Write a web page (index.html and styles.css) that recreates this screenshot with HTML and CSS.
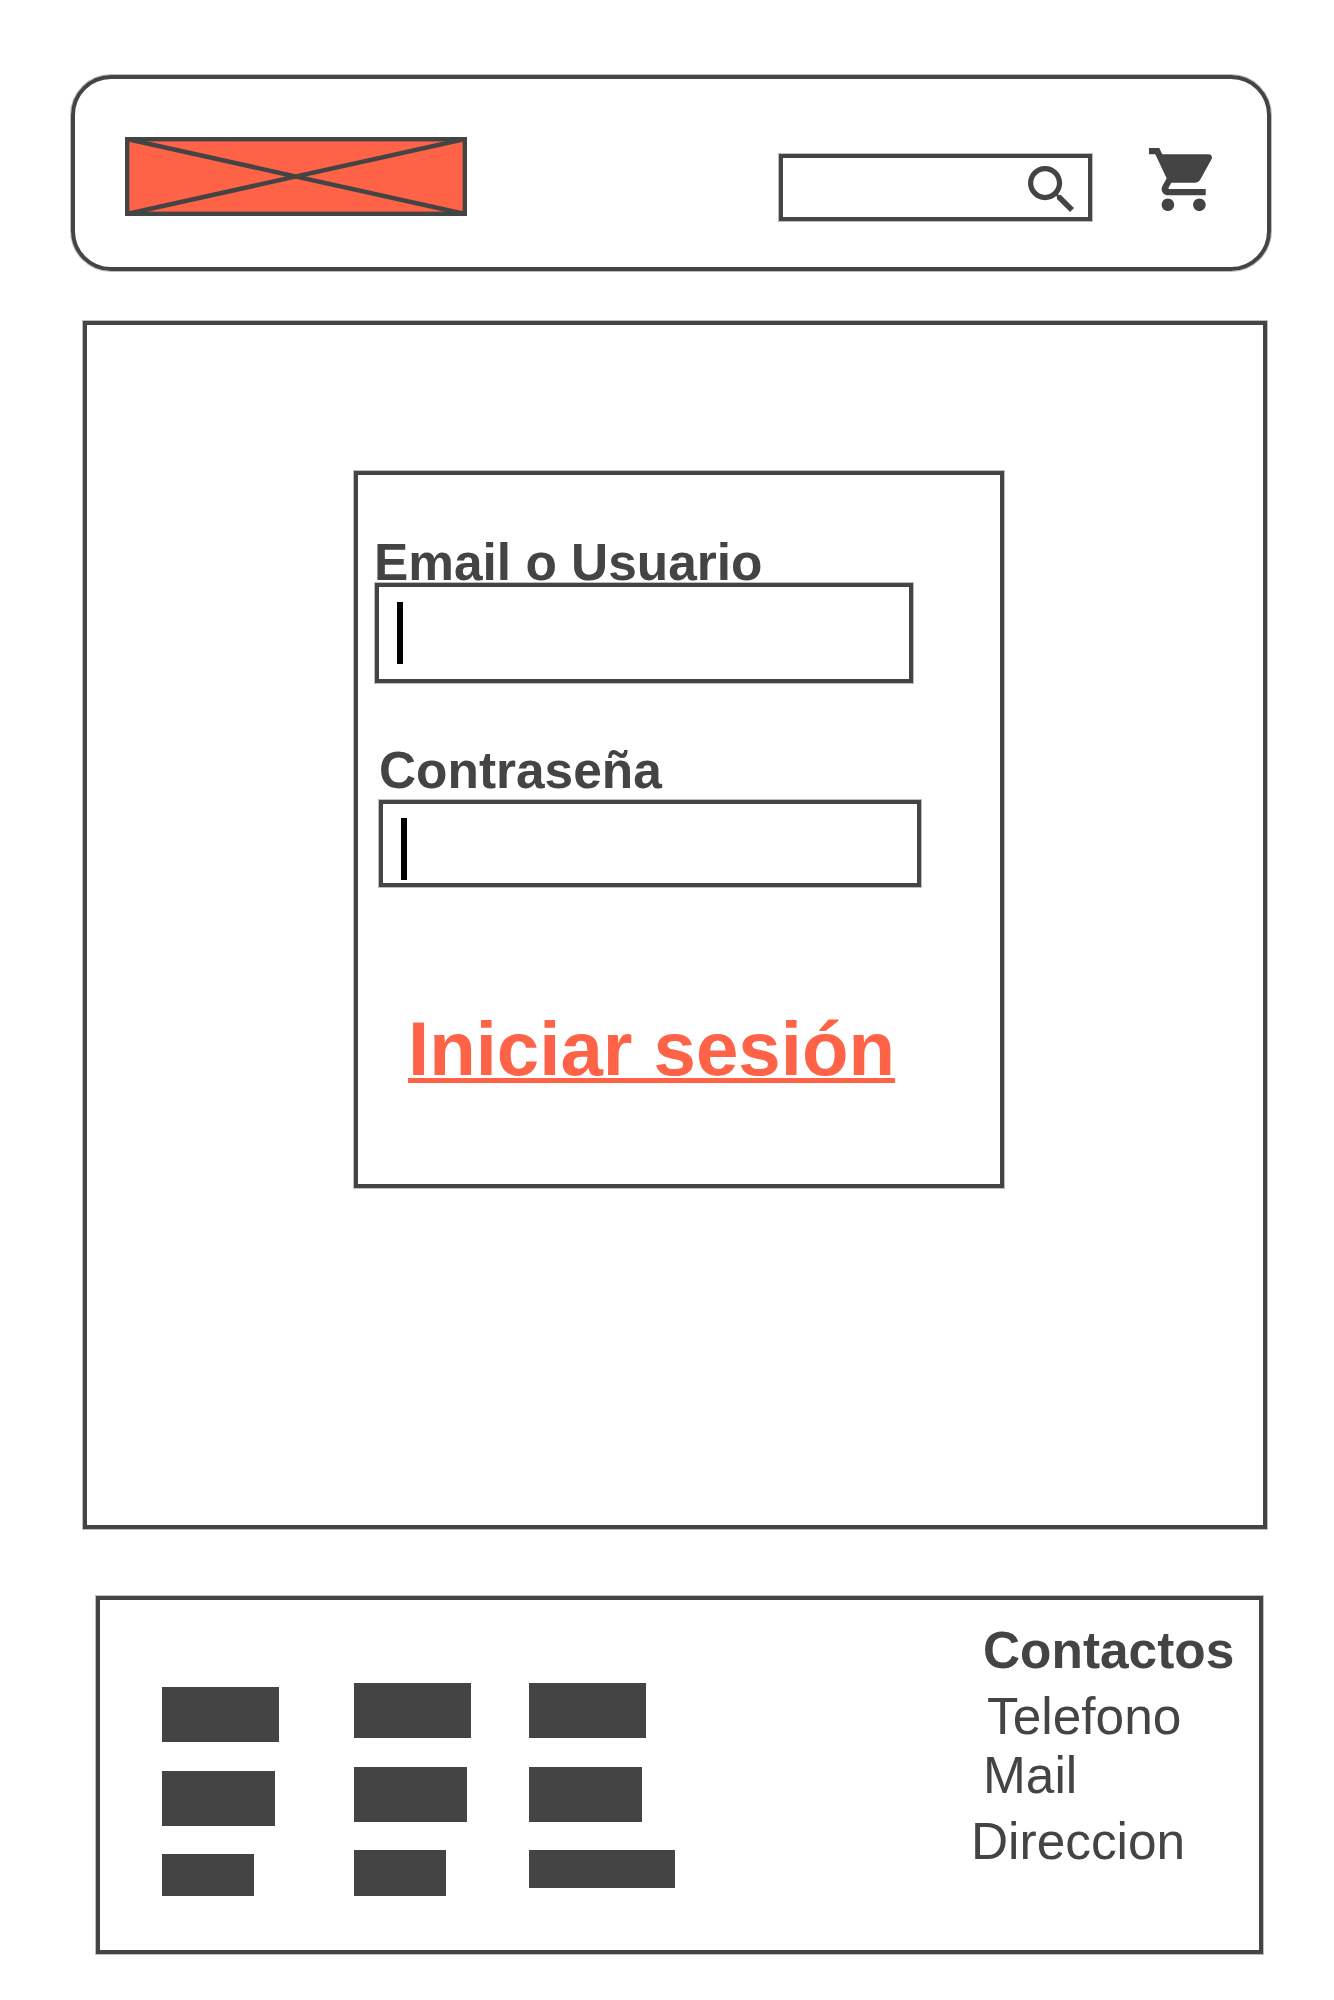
FILE: index.html
```html
<!DOCTYPE html>
<html lang="es">
<head>
  <meta charset="UTF-8">
  <meta name="viewport" content="width=device-width, initial-scale=1.0">
  <title>Iniciar sesi&oacute;n</title>
  <link rel="stylesheet" href="styles.css">
</head>
<body>
  <header class="cabecera">
    <svg class="logo" viewBox="0 0 342 79" aria-label="Logo">
      <rect x="2.2" y="2.2" width="337.6" height="74.6" fill="#ff6347" stroke="#444" stroke-width="4.4"/>
      <path d="M2 2 340 77M340 2 2 77" fill="none" stroke="#444" stroke-width="4.4"/>
    </svg>
    <div class="buscador">
      <svg class="icono-buscar" viewBox="3 3 17.49 17.49" aria-label="Buscar">
        <path d="M15.5 14h-.79l-.28-.27C15.41 12.59 16 11.11 16 9.5 16 5.91 13.09 3 9.5 3S3 5.91 3 9.5 5.91 16 9.5 16c1.61 0 3.09-.59 4.23-1.57l.27.28v.79l5 4.99L20.49 19l-4.99-5zm-6 0C7.01 14 5 11.99 5 9.5S7.01 5 9.5 5 14 7.01 14 9.5 11.99 14 9.5 14z"/>
      </svg>
    </div>
    <svg class="carrito" viewBox="1 2 20 20" aria-label="Carrito">
      <path d="M7 18c-1.1 0-1.99.9-1.99 2S5.9 22 7 22s2-.9 2-2-.9-2-2-2zM1 2v2h2l3.6 7.59-1.35 2.45c-.16.28-.25.61-.25.96 0 1.1.9 2 2 2h12v-2H7.42c-.14 0-.25-.11-.25-.25l.03-.12.9-1.63h7.45c.75 0 1.41-.41 1.75-1.03l3.58-6.49c.08-.14.12-.31.12-.48 0-.55-.45-1-1-1H5.21l-.94-2H1zm16 16c-1.1 0-1.99.9-1.99 2s.89 2 1.99 2 2-.9 2-2-.9-2-2-2z"/>
    </svg>
  </header>

  <main class="contenido">
    <form class="login">
      <div class="etiqueta etiqueta-email">Email o Usuario</div>
      <div class="campo campo-email"><span class="cursor"></span></div>
      <div class="etiqueta etiqueta-clave">Contrase&ntilde;a</div>
      <div class="campo campo-clave"><span class="cursor"></span></div>
      <a class="enviar" href="#">Iniciar sesi&oacute;n</a>
    </form>
  </main>

  <footer class="pie">
    <div class="columna col-1">
      <div class="barra b117"></div>
      <div class="barra b113"></div>
      <div class="barra b92 corta"></div>
    </div>
    <div class="columna col-2">
      <div class="barra b117"></div>
      <div class="barra b113"></div>
      <div class="barra b92 media"></div>
    </div>
    <div class="columna col-3">
      <div class="barra b117"></div>
      <div class="barra b113"></div>
      <div class="barra b146 baja"></div>
    </div>
    <div class="contactos">
      <div class="contactos-titulo">Contactos</div>
      <div class="contacto telefono">Telefono</div>
      <div class="contacto mail">Mail</div>
      <div class="contacto direccion">Direccion</div>
    </div>
  </footer>
</body>
</html>
```

FILE: styles.css
```css
body {
  margin: 0;
  padding: 75px 0 0;
  height: 2000px;
  box-sizing: border-box;
  background-color: #fff;
  color: #444;
  font-family: "Liberation Sans", Arial, sans-serif;
}

/* los trazos del boceto tienen el borde un poco difuminado */
.cabecera, .buscador, .contenido, .login, .campo, .pie {
  box-shadow: 0 0 0 1px rgba(68, 68, 68, .35);
}

.cabecera {
  display: flex;
  align-items: flex-start;
  box-sizing: border-box;
  width: 1200px;
  height: 196px;
  margin-left: 71px;
  border: 4px solid #444;
  border-radius: 40px;
}
.logo {
  width: 342px;
  height: 79px;
  margin: 58px 0 0 50px;
}
.buscador {
  display: flex;
  justify-content: flex-end;
  box-sizing: border-box;
  width: 313px;
  height: 67px;
  margin: 75px 0 0 312px;
  padding: 8px 14px 0 0;
  border: 4px solid #444;
}
.icono-buscar {
  width: 46px;
  height: 46px;
  fill: #444;
}
.carrito {
  width: 63px;
  height: 63px;
  margin: 69px 0 0 57px;
  fill: #444;
}

.contenido {
  box-sizing: border-box;
  width: 1184px;
  height: 1208px;
  margin: 50px 0 0 83px;
  padding: 146px 0 0 267px;
  border: 4px solid #444;
}
.login {
  box-sizing: border-box;
  width: 650px;
  height: 717px;
  border: 4px solid #444;
}
.etiqueta {
  font-size: 51.4px;
  font-weight: bold;
  line-height: 44px;
}
.etiqueta-email {
  margin: 65px 0 -1px 16px;
}
.etiqueta-clave {
  margin: 65px 0 8px 21px;
}
.campo {
  box-sizing: border-box;
  border: 4px solid #444;
}
.campo-email {
  width: 538px;
  height: 100px;
  margin-left: 17px;
  padding: 15px 0 0 18px;
}
.campo-clave {
  width: 542px;
  height: 87px;
  margin-left: 21px;
  padding: 14px 0 0 18px;
}
.cursor {
  display: block;
  width: 6px;
  height: 62px;
  background-color: #000;
}
.enviar {
  display: inline-block;
  margin: 117px 0 0 50px;
  color: #ff6347;
  font-size: 76.2px;
  font-weight: bold;
  line-height: 90px;
  text-decoration-thickness: 5px;
}

.pie {
  display: flex;
  align-items: flex-start;
  box-sizing: border-box;
  width: 1167px;
  height: 358px;
  margin: 67px 0 0 96px;
  padding-left: 62px;
  border: 4px solid #444;
}
.columna {
  display: flex;
  flex-direction: column;
  flex: none;
  gap: 28.5px;
}
.col-1 {
  width: 192px;
  margin-top: 87px;
}
.col-2 {
  width: 175px;
  margin-top: 83px;
}
.col-3 {
  width: 146px;
  margin-top: 83px;
}
.barra {
  height: 55px;
  background-color: #444;
}
.b117 { width: 117px; }
.b113 { width: 113px; }
.b92 { width: 92px; }
.b146 { width: 146px; }
.corta { height: 42px; }
.media { height: 46px; }
.baja { height: 38px; }

.contactos {
  margin-top: 21px;
  margin-left: 296px;
  font-size: 51.4px;
  line-height: 58px;
  white-space: nowrap;
}
.contactos-titulo {
  margin-left: 12px;
  font-weight: bold;
}
.telefono {
  margin: 8px 0 0 16px;
}
.mail {
  margin: 1px 0 0 12px;
}
.direccion {
  margin-top: 8px;
}
```
